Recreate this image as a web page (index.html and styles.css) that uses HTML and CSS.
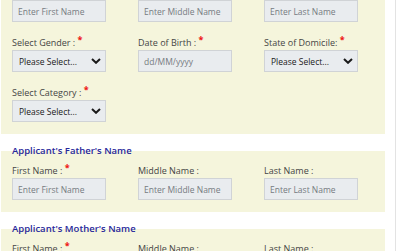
FILE: index.html
```html
<!DOCTYPE html>
<html lang="en">
<head>
    <meta charset="UTF-8">
    <meta name="viewport" content="width=device-width, initial-scale=1.0">
    <title>Applicant Details</title>
    <link rel="stylesheet" href="styles.css">
</head>
<body>

<div class="page">
<form class="form">

    <fieldset class="panel panel-top">
        <div class="grid">
            <div class="cell">
                <input type="text" class="field" placeholder="Enter First Name">
            </div>
            <div class="cell">
                <input type="text" class="field" placeholder="Enter Middle Name">
            </div>
            <div class="cell">
                <input type="text" class="field" placeholder="Enter Last Name">
            </div>

            <div class="cell">
                <label>Select Gender : <span class="req">*</span></label>
                <div class="select-wrap">
                    <select class="field">
                        <option>Please Select...</option>
                        <option>Male</option>
                        <option>Female</option>
                    </select>
                    <svg class="chevron" width="10" height="6" viewBox="0 0 10 6"><path d="M1 1 L5 4.8 L9 1" fill="none" stroke="#1a1a1a" stroke-width="2"/></svg>
                </div>
            </div>
            <div class="cell">
                <label>Date of Birth : <span class="req">*</span></label>
                <input type="text" class="field" placeholder="dd/MM/yyyy">
            </div>
            <div class="cell">
                <label>State of Domicile: <span class="req">*</span></label>
                <div class="select-wrap">
                    <select class="field">
                        <option>Please Select...</option>
                    </select>
                    <svg class="chevron" width="10" height="6" viewBox="0 0 10 6"><path d="M1 1 L5 4.8 L9 1" fill="none" stroke="#1a1a1a" stroke-width="2"/></svg>
                </div>
            </div>

            <div class="cell">
                <label>Select Category : <span class="req">*</span></label>
                <div class="select-wrap">
                    <select class="field">
                        <option>Please Select...</option>
                    </select>
                    <svg class="chevron" width="10" height="6" viewBox="0 0 10 6"><path d="M1 1 L5 4.8 L9 1" fill="none" stroke="#1a1a1a" stroke-width="2"/></svg>
                </div>
            </div>
        </div>
    </fieldset>

    <fieldset class="panel">
        <legend>Applicant's Father's Name</legend>
        <div class="grid">
            <div class="cell">
                <label>First Name : <span class="req">*</span></label>
                <input type="text" class="field" placeholder="Enter First Name">
            </div>
            <div class="cell">
                <label>Middle Name :</label>
                <input type="text" class="field" placeholder="Enter Middle Name">
            </div>
            <div class="cell">
                <label>Last Name :</label>
                <input type="text" class="field" placeholder="Enter Last Name">
            </div>
        </div>
    </fieldset>

    <fieldset class="panel">
        <legend>Applicant's Mother's Name</legend>
        <div class="grid">
            <div class="cell">
                <label>First Name : <span class="req">*</span></label>
                <input type="text" class="field" placeholder="Enter First Name">
            </div>
            <div class="cell">
                <label>Middle Name :</label>
                <input type="text" class="field" placeholder="Enter Middle Name">
            </div>
            <div class="cell">
                <label>Last Name :</label>
                <input type="text" class="field" placeholder="Enter Last Name">
            </div>
        </div>
    </fieldset>

</form>
</div>

</body>
</html>
```

FILE: styles.css
```css
body {
    font-family: "Open Sans", "Noto Sans", sans-serif;
    margin: 0;
    padding: 0;
    background: #fff;
}
.page {
    width: 395px;
    min-height: 100vh;
    border-right: 1px solid #e3e3e3;
}
.form {
    width: 384px;
    padding-left: 1px;
}
.panel {
    margin: 0 0 10px 0;
    padding: 6px 11px 12px 11px;
    border: none;
    background: #f5f5dc;
    min-width: 0;
}
.panel-top {
    padding-top: 0;
}
legend {
    padding: 0;
    font-size: 9.5px;
    line-height: 14px;
    font-weight: 600;
    color: #27279a;
}
.grid {
    display: grid;
    grid-template-columns: repeat(3, 94px);
    column-gap: 32px;
    row-gap: 14px;
}
label {
    display: block;
    font-size: 9px;
    line-height: 14px;
    color: #444;
    white-space: nowrap;
}
.req {
    color: #ee1111;
    font-weight: bold;
    font-size: 9px;
    position: relative;
    top: -3px;
}
.field {
    display: block;
    box-sizing: border-box;
    width: 94px;
    height: 22px;
    margin: 0;
    padding: 0 5px;
    font-family: inherit;
    font-size: 8.5px;
    color: #222;
    background: #e9ecef;
    border: 1px solid #d0d3d6;
    border-radius: 0;
    outline: none;
}
.field::placeholder {
    color: #767b81;
}
.select-wrap {
    position: relative;
}
select.field {
    appearance: none;
    -webkit-appearance: none;
    padding-left: 6px;
    color: #1a1a1a;
}
.chevron {
    position: absolute;
    right: 5px;
    top: 8px;
    pointer-events: none;
}
```
